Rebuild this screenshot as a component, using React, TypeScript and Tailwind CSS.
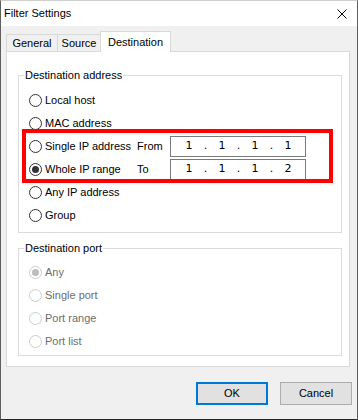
import React from 'react';

type RadioProps = { label: string; checked?: boolean; disabled?: boolean };

function Radio({ label, checked, disabled }: RadioProps) {
  return (
    <div className="flex h-[23px] items-center">
      <span
        className={`flex h-[13px] w-[13px] shrink-0 items-center justify-center rounded-full border bg-white ${
          disabled ? 'border-[#cccccc]' : 'border-[#333333]'
        }`}
      >
        {checked && (
          <span className={`h-[7px] w-[7px] rounded-full ${disabled ? 'bg-[#bcbcbc]' : 'bg-[#333333]'}`} />
        )}
      </span>
      <span className={`ml-[3px] whitespace-nowrap ${disabled ? 'text-[#6d6d6d]' : 'text-black'}`}>{label}</span>
    </div>
  );
}

function IpBox({ value }: { value: string[] }) {
  return (
    <div className="flex h-[21px] w-[136px] items-center border border-[#7a7a7a] bg-white pl-[7px] font-['DejaVu_Sans',sans-serif] text-[11px] text-black">
      {value.map((part, i) => (
        <React.Fragment key={i}>
          <span className="w-[22px] text-center">{part}</span>
          {i < value.length - 1 && <span className="w-[11px] text-center">.</span>}
        </React.Fragment>
      ))}
    </div>
  );
}

function IpRow({ label, caption, value, checked }: { label: string; caption: string; value: string[]; checked?: boolean }) {
  return (
    <div className="flex h-[23px] items-center">
      <div className="w-[108px]">
        <Radio label={label} checked={checked} />
      </div>
      <span className="w-[33px]">{caption}</span>
      <IpBox value={value} />
    </div>
  );
}

function Tab({ label, active, className }: { label: string; active?: boolean; className: string }) {
  return (
    <div
      className={`flex items-center justify-center border-x border-t border-[#d9d9d9] ${
        active ? 'relative z-10 -mb-px h-[21px] bg-white' : 'h-[17px] bg-[#f0f0f0]'
      } ${className}`}
    >
      {label}
    </div>
  );
}

export default function App() {
  return (
    <div className="flex h-[420px] w-[358px] flex-col border border-t-[#cfcfcf] border-x-[#5f5f5f] border-b-[#262626] font-['Liberation_Sans',Arial,sans-serif] text-[11px] text-black">
      {/* title bar */}
      <div className="flex h-[25px] items-center justify-between bg-white pl-[3px] pr-[10px]">
        <span>Filter Settings</span>
        <svg width="10" height="10" viewBox="0 0 10 10">
          <path d="M0.5 0.5 L9.5 9.5 M9.5 0.5 L0.5 9.5" stroke="#000" strokeWidth="1" fill="none" />
        </svg>
      </div>

      <div className="flex flex-1 flex-col bg-[#f0f0f0] pl-[5px] pr-[7px] pt-[5px]">
        {/* tabs */}
        <div className="flex items-end">
          <Tab label="General" className="w-[52px]" />
          <Tab label="Source" className="-ml-px w-[44px]" />
          <Tab label="Destination" active className="-ml-px w-[71px]" />
        </div>

        <div className="h-[316px] border border-[#d9d9d9] bg-white pt-[16px]">
          <fieldset className="ml-[11px] mr-[7px] border border-[#dcdcdc]">
            <legend className="ml-[5px] px-[1px] leading-[14px]">Destination address</legend>
            <div className="pb-[5px] pl-[10px] pt-[7px]">
              <Radio label="Local host" />
              <Radio label="MAC address" />
              <div className="relative">
                <IpRow label="Single IP address" caption="From" value={['1', '1', '1', '1']} />
                <IpRow label="Whole IP range" caption="To" value={['1', '1', '1', '2']} checked />
                <div className="pointer-events-none absolute -left-[7px] -top-[6px] h-[54px] w-[311px] border-4 border-[#ff0000]" />
              </div>
              <Radio label="Any IP address" />
              <Radio label="Group" />
            </div>
          </fieldset>

          <fieldset className="ml-[11px] mr-[7px] mt-[8px] border border-[#dcdcdc]">
            <legend className="ml-[5px] px-[1px] leading-[14px]">Destination port</legend>
            <div className="pb-[2px] pl-[10px] pt-[6px]">
              <Radio label="Any" checked disabled />
              <Radio label="Single port" disabled />
              <Radio label="Port range" disabled />
              <Radio label="Port list" disabled />
            </div>
          </fieldset>
        </div>

        {/* buttons */}
        <div className="-mr-[2px] mt-[15px] flex justify-end gap-[12px]">
          <button className="flex h-[23px] w-[72px] items-center justify-center border-2 border-[#0078d7] bg-[#e1e1e1]">
            OK
          </button>
          <button className="flex h-[23px] w-[72px] items-center justify-center border border-[#adadad] bg-[#e1e1e1]">
            Cancel
          </button>
        </div>
      </div>
    </div>
  );
}
